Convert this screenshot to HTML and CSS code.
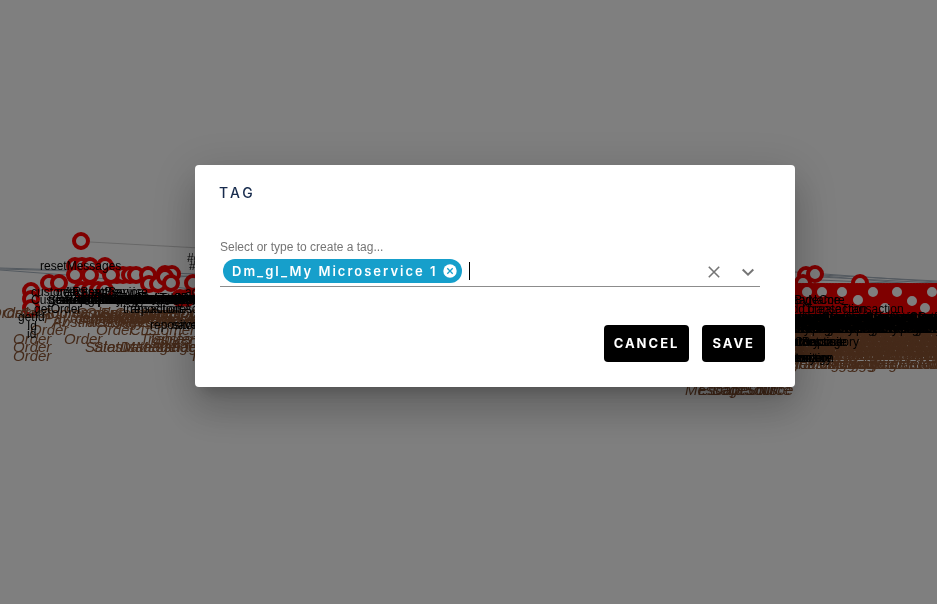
FILE: index.html
```html
<!DOCTYPE html>
<html lang="en">
<head>
<meta charset="utf-8">
<title>Tag</title>
<link rel="stylesheet" href="styles.css">
</head>
<body>
<svg class="graph" viewBox="0 0 937 604" preserveAspectRatio="xMidYMid slice" aria-hidden="true">
  <g id="edges" class="edges"></g>
  <g id="nodes" class="nodes"></g>
  <g id="labels"></g>
</svg>
<div class="overlay">
  <form class="dialog" role="dialog" aria-labelledby="title">
    <h1 class="title" id="title">TAG</h1>
    <div class="field">
      <label class="field-label" for="tag">Select or type to create a tag...</label>
      <div class="control">
        <span class="chip">Dm_gl_My Microservice 1
          <button class="chip-remove" type="button" aria-label="Remove tag"><svg viewBox="0 0 14 14" width="14" height="14"><circle cx="7" cy="7" r="6.7" fill="#fff"/><path d="M4.3 4.3l5.4 5.4M9.7 4.3L4.3 9.7" stroke="#169fcb" stroke-width="1.3"/></svg></button>
        </span>
        <span class="caret"></span>
        <input class="input" id="tag" type="text">
        <button class="icon" type="button" aria-label="Clear"><svg viewBox="0 0 20 20" width="20" height="20"><path d="M4.8 5.8l10.4 10.4M15.2 5.8L4.8 16.2" fill="none" stroke="#757575" stroke-width="1.6"/></svg></button>
        <button class="icon" type="button" aria-label="Open"><svg viewBox="0 0 20 20" width="20" height="20"><path d="M4.7 8.5l5.3 5.2 5.3-5.2" fill="none" stroke="#757575" stroke-width="2"/></svg></button>
      </div>
    </div>
    <div class="actions">
      <button class="button" type="button">CANCEL</button>
      <button class="button" type="submit">SAVE</button>
    </div>
  </form>
</div>
<script src="graph.js"></script>
</body>
</html>
```
FILE: styles.css
```css
* { box-sizing: border-box; }
body { margin: 0; min-height: 100vh; background: #fff; font-family: "Liberation Sans", Arial, sans-serif; }
.graph { position: fixed; inset: 0; width: 100%; height: 100%; }
.edges path { fill: none; stroke: #a8b4c0; stroke-width: 1; }
.edges path:first-child { stroke: #d0d0d0; }
.nodes circle { fill: #fff; stroke: #f00; stroke-width: 4; }
.method { font-size: 12px; fill: #000; }
.entity { font-size: 15px; font-style: italic; fill: #8a5433; }
.overlay { position: fixed; inset: 0; display: flex; align-items: center; justify-content: center; padding-left: 53px; padding-bottom: 52px; background: rgba(0, 0, 0, .5); }
.dialog { width: 600px; max-width: 100%; padding: 16px 24px 25px; border-radius: 4px; background: #fff; box-shadow: 0 11px 15px -7px rgba(0, 0, 0, .2), 0 24px 38px 3px rgba(0, 0, 0, .14), 0 9px 46px 8px rgba(0, 0, 0, .12); }
.title { margin: 0; font: 500 14px/24px Inter, sans-serif; letter-spacing: 3px; color: #172b4d; }
.field { margin: 34px 11px 0 1px; }
.field-label { display: block; font-size: 12px; line-height: 16px; color: #757575; }
.control { display: flex; align-items: center; height: 32px; border-bottom: 1px solid #8c8c8c; }
.chip { display: flex; align-items: center; gap: 6px; height: 24px; margin-left: 3px; padding: 0 5px 0 9px; border-radius: 12px; background: #169fcb; color: #fff; font: 600 13px/24px Inter, sans-serif; letter-spacing: 2px; white-space: nowrap; }
.chip-remove, .icon { display: flex; padding: 0; border: 0; background: none; }
.caret { width: 1px; height: 18px; margin-left: 7px; background: #000; }
.input { flex: 1; min-width: 0; border: 0; outline: 0; padding: 0; font-size: 14px; background: none; }
.icon { margin-left: 12px; padding: 0 2px 0 0; }
.actions { display: flex; justify-content: flex-end; gap: 13px; margin: 38px 6px 0 0; }
.button { height: 37px; padding: 0 10px; border: 0; border-radius: 4px; background: #000; color: #fff; font: 700 13px/37px Inter, sans-serif; letter-spacing: 2px; }
```
FILE: graph.js
```
const SVG = 'http://www.w3.org/2000/svg';
function add(parent, tag, attrs, text) {
  const el = document.createElementNS(SVG, tag);
  for (const key in attrs) el.setAttribute(key, attrs[key]);
  if (text) el.textContent = text;
  document.getElementById(parent).append(el);
}

const edges = ['M90 242L200 248', 'M0 268L200 274', 'M0 269L110 272L200 277', 'M0 270L80 276L200 290',
  'M31 291L200 275', 'M795 272L937 282', 'M800 276L937 283', 'M800 274L937 286', 'M795 279L937 285', 'M820 275L937 281'];
edges.forEach(d => add('edges', 'path', { d }));

const nodes = [[31,291],[31,299],[31,308],[49,283],[59,283],[75,266],[82,266],[90,266],[105,266],
  [117,275],[123,275],[130,275],[136,275],[111,275],[75,275],[90,275],[148,275],[165,274],[172,274],
  [149,284],[158,284],[165,277],[171,283],[193,283],[82,290],[90,290],[98,290],[105,290],[180,298],[187,298],
  [81,241],[806,275],[815,274],[803,283],[860,283]];
for (let x = 797; x < 945; x += 3) nodes.push([x, 292], [x, 300], [x, 308]);
for (const [x, y] of [[822,292],[873,292],[807,292],[842,292],[897,292],[932,292],[858,300],[912,301],[925,308],[885,308]]) nodes.push([x, y]);
nodes.forEach(([cx, cy]) => add('nodes', 'circle', { cx, cy, r: 7 }));

const entities = [[-10,318,'Order'],[3,318,'OrderAddress'],[20,318,'CustomerOrder'],[44,323,'PaymentAddress'],
  [52,327,'AbstractEntity'],[76,318,'OrderCustomer'],[85,327,'MessageSource'],[80,322,'Enterprise'],[100,318,'Enterprise'],
  [130,322,'SalesOrder'],[146,318,'Catalog'],[30,335,'Order'],[96,335,'Order'],[130,335,'Customer'],[105,326,'Aggregate'],[120,324,'CustomerAddress'],
  [75,324,'CustomerAddress'],[92,320,'AbstractEntity'],[110,320,'PaymentOrder'],[140,327,'Enterprise'],
  [13,344,'Order'],[64,344,'Order'],[140,344,'TransferOrder'],[148,344,'Tables'],[150,348,'SalesOrder'],[13,352,'Order'],[85,352,'SalesManager'],
  [93,352,'StatusMessage'],[120,352,'DataManager'],[13,361,'Order'],[192,361,'Item'],
  [685,395,'MessageSource'],[698,395,'EscapeUtils'],[712,395,'DataSource']];
const entityNames = ['IntegrationModule', 'MessageSource', 'AggregateRoot', 'CustomerEntity', 'CatalogContext'];
for (let row = 0; row < 8; row++)
  for (let i = 0; i < 23; i++)
    entities.push([680 + i * 12, 325 + row * 5, entityNames[(i + row) % 5]]);
entityNames.forEach((name, i) => entities.push([745 + i * 42, 369, name], [765 + i * 42, 369, name]));
entities.forEach(([x, y, name]) => add('labels', 'text', { x, y, class: 'entity' }, name));

const methods = [[40,270,'resetMessages'],[187,262,'#get'],[189,270,'#set'],[31,296,'customerService'],[56,296,'getResetService'],
  [64,296,'AbstractService'],[31,304,'CustomerRepository'],[48,304,'StatusRepository'],[34,313,'getOrder'],
  [18,321,'getId'],[27,330,'Id'],[27,338,'id'],[123,313,'transaction'],[130,313,'repositories'],[150,329,'repository'],
  [172,329,'saveAll'],[185,296,'add'],[175,313,'isActive'],
  [770,304,'messageCore'],[775,304,'findByName'],[808,313,'createTransaction'],[785,313,'addTransaction']];
const methodNames = ['getRepository', 'saveTransaction', 'createMessage', 'findCustomer'];
for (let i = 0; i < 12; i++) methods.push([48 + i * 10, 304, methodNames[i % 4]], [64 + i * 10, 302, methodNames[(i + 2) % 4]]);
for (let row = 0; row < 4; row++)
  for (let i = 0; i < 20; i++) methods.push([725 + i * 11, 321 + row * 4, methodNames[(i + row) % 4]]);
for (let i = 0; i < 5; i++) methods.push([745 + i * 10, 346, methodNames[i % 4]], [742 + i * 4, 362, methodNames[i % 4]]);
methods.forEach(([x, y, name]) => add('labels', 'text', { x, y, class: 'method' }, name));
```
